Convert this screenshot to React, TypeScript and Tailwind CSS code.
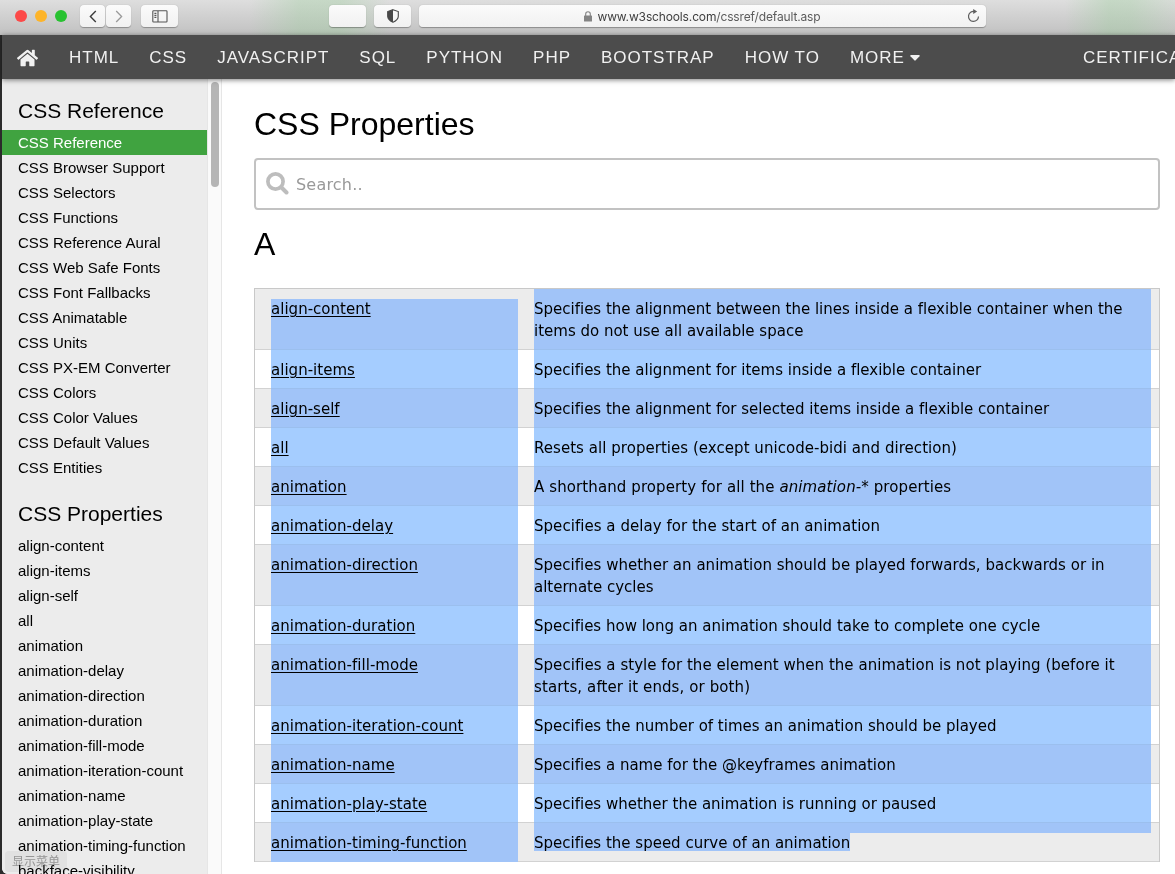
import { FaHome } from "react-icons/fa";

const referenceLinks = [
  "CSS Reference",
  "CSS Browser Support",
  "CSS Selectors",
  "CSS Functions",
  "CSS Reference Aural",
  "CSS Web Safe Fonts",
  "CSS Font Fallbacks",
  "CSS Animatable",
  "CSS Units",
  "CSS PX-EM Converter",
  "CSS Colors",
  "CSS Color Values",
  "CSS Default Values",
  "CSS Entities",
];

const propertyLinks = [
  "align-content",
  "align-items",
  "align-self",
  "all",
  "animation",
  "animation-delay",
  "animation-direction",
  "animation-duration",
  "animation-fill-mode",
  "animation-iteration-count",
  "animation-name",
  "animation-play-state",
  "animation-timing-function",
  "backface-visibility",
];

const navLinks = ["HTML", "CSS", "JAVASCRIPT", "SQL", "PYTHON", "PHP", "BOOTSTRAP", "HOW TO"];

const rows: { name: string; lines: React.ReactNode[] }[] = [
  {
    name: "align-content",
    lines: [
      "Specifies the alignment between the lines inside a flexible container when the",
      "items do not use all available space",
    ],
  },
  { name: "align-items", lines: ["Specifies the alignment for items inside a flexible container"] },
  { name: "align-self", lines: ["Specifies the alignment for selected items inside a flexible container"] },
  {
    name: "all",
    lines: [
      <span className="tracking-[0.04px]">Resets all properties (except unicode-bidi and direction)</span>,
    ],
  },
  {
    name: "animation",
    lines: [
      <span className="tracking-[0.1px]">
        A shorthand property for all the <em>animation-*</em> properties
      </span>,
    ],
  },
  {
    name: "animation-delay",
    lines: [<span className="tracking-[0.04px]">Specifies a delay for the start of an animation</span>],
  },
  {
    name: "animation-direction",
    lines: [
      <span className="tracking-[0.02px]">
        Specifies whether an animation should be played forwards, backwards or in
      </span>,
      "alternate cycles",
    ],
  },
  { name: "animation-duration", lines: ["Specifies how long an animation should take to complete one cycle"] },
  {
    name: "animation-fill-mode",
    lines: [
      <span className="tracking-[0.04px]">
        Specifies a style for the element when the animation is not playing (before it
      </span>,
      <span className="tracking-[0.1px]">starts, after it ends, or both)</span>,
    ],
  },
  { name: "animation-iteration-count", lines: ["Specifies the number of times an animation should be played"] },
  { name: "animation-name", lines: ["Specifies a name for the @keyframes animation"] },
  { name: "animation-play-state", lines: ["Specifies whether the animation is running or paused"] },
  { name: "animation-timing-function", lines: ["Specifies the speed curve of an animation"] },
];

const chromeButton =
  "flex h-[22px] items-center justify-center rounded-[4px] bg-gradient-to-b from-[#fbfbfb] to-[#f1f1f1] shadow-[0_0.5px_1px_rgba(0,0,0,0.3)]";

function BrowserBar() {
  return (
    <div className="relative flex h-[35px] shrink-0 items-start bg-gradient-to-b from-[#dedede] to-[#c1c1c1] pl-[15px] pt-[5px]">
      <div className="absolute inset-y-0 left-[250px] w-[140px] bg-[linear-gradient(90deg,rgba(150,205,150,0),rgba(150,205,150,0.32)_35%,rgba(150,205,150,0.32)_65%,rgba(150,205,150,0))]" />
      <div className="absolute inset-y-0 left-[1065px] w-[110px] bg-[linear-gradient(90deg,rgba(150,205,150,0),rgba(150,205,150,0.34)_40%,rgba(150,205,150,0.32)_60%,rgba(150,205,150,0.08))]" />
      <div className="relative flex h-[22px] items-center gap-2">
        <span className="h-3 w-3 rounded-full bg-[#fc4948]" />
        <span className="h-3 w-3 rounded-full bg-[#fdb429]" />
        <span className="h-3 w-3 rounded-full bg-[#28c231]" />
      </div>
      <div className="relative ml-[13px] flex gap-px">
        <div className={`${chromeButton} w-[25px]`}>
          <svg width="8" height="13" viewBox="0 0 8 13" fill="none" stroke="#3c3c3c" strokeWidth="1.4">
            <path d="M6.8 1 1.4 6.5 6.8 12" />
          </svg>
        </div>
        <div className={`${chromeButton} w-[25px]`}>
          <svg width="8" height="13" viewBox="0 0 8 13" fill="none" stroke="#9a9a9a" strokeWidth="1.3">
            <path d="M1.2 1 6.6 6.5 1.2 12" />
          </svg>
        </div>
      </div>
      <div className={`${chromeButton} relative ml-[10px] w-[37px]`}>
        <svg width="16" height="13" viewBox="0 0 16 13" fill="none" stroke="#555" strokeWidth="1.1">
          <rect x="0.8" y="0.8" width="14.2" height="11.2" rx="0.8" />
          <path d="M6 1v11M2.4 3.4h2M2.4 5.4h2M2.4 7.4h2" />
        </svg>
      </div>
      <div className={`${chromeButton} relative ml-[151px] w-[37px]`} />
      <div className={`${chromeButton} relative ml-2 w-[37px]`}>
        <svg width="12" height="14" viewBox="0 0 12 14">
          <path d="M6 .7 11.3 2.6v4.600c0 2.700-2 4.500-5.300 6C2.700 11.700.7 9.900.7 7.200V2.600Z" fill="none" stroke="#484848" strokeWidth="1.1" />
          <path d="M6 .7.7 2.600v4.600c0 2.700 2 4.500 5.300 6Z" fill="#484848" />
        </svg>
      </div>
      <div className={`${chromeButton} relative ml-2 w-[567px]`}>
        <svg className="mr-[5px]" width="8" height="11" viewBox="0 0 8 11">
          <rect x="0" y="4.500" width="8" height="6" rx="0.600" fill="#848484" />
          <path d="M1.700 5V3.100a2.300 2.300 0 0 1 4.600 0V5" fill="none" stroke="#848484" strokeWidth="1.100" />
        </svg>
        <span className="whitespace-nowrap pt-px font-['Inter',sans-serif] text-[12px] leading-[22px] tracking-[-0.14px] text-[#3e3e3e]">
          www.w3schools.com<span className="text-[#5c5c5c]">/cssref/default.asp</span>
        </span>
        <svg className="absolute right-[6px] top-[4px]" width="13" height="14" viewBox="0 0 13 14">
          <path d="M7.500 2.500A5 5 0 1 0 11.500 7.500" fill="none" stroke="#5f5f5f" strokeWidth="1.200" />
          <path d="M6.200 0v5l4-2.500Z" fill="#5f5f5f" />
        </svg>
      </div>
    </div>
  );
}

function NavBar() {
  return (
    <nav className="relative z-10 ml-[2px] flex h-[44px] shrink-0 items-center bg-[#4c4c4c] pt-px text-[17px] leading-[43px] tracking-[0.985px] text-[#f1f1f1] shadow-[0_1px_5px_rgba(0,0,0,0.5)]">
      <div className="flex w-[52px] justify-start pl-[15px]">
        <FaHome className="h-[20px] w-[21px]" />
      </div>
      {navLinks.map((label) => (
        <a key={label} className="shrink-0 whitespace-nowrap px-[15px]">
          {label}
        </a>
      ))}
      <a className="flex shrink-0 items-center px-[15px]">
        MORE
        <svg className="ml-[5px]" width="10" height="6" viewBox="0 0 10 6">
          <path d="M1 0h8q1.200.2.500 1.200L5.700 5.300q-.7.7-1.400 0L.5 1.200Q-.2.2 1 0Z" fill="#f1f1f1" />
        </svg>
      </a>
      <a className="ml-auto w-[92px] shrink-0 overflow-hidden whitespace-nowrap">CERTIFICATES</a>
    </nav>
  );
}

function SideSection({ title, links, active, className }: { title: string; links: string[]; active?: number; className: string }) {
  return (
    <section>
      <h2 className={`pl-4 text-[21px] leading-[30px] ${className}`}>{title}</h2>
      {links.map((link, i) => (
        <a
          key={link}
          className={`block h-[25px] whitespace-nowrap pl-4 text-[15px] leading-[25px] ${i === active ? "bg-[#40a340] text-white" : ""}`}
        >
          {link}
        </a>
      ))}
    </section>
  );
}

function PropertyRow({ index, name, lines }: { index: number; name: string; lines: React.ReactNode[] }) {
  const shaded = index % 2 === 0;
  const last = index === rows.length - 1;
  const plain = `border-b border-[#d2d2d2] ${shaded ? "bg-[#ececec]" : "bg-white"}`;
  const selected = `${shaded ? "bg-[#a1c4f8]" : "bg-[#a5cdff]"} border-b ${last ? "border-[#a1c4f8]" : "border-[#9bbfee]"}`;
  return (
    <div className="flex">
      <div className={`w-4 ${plain}`} />
      <div
        className={`w-[247px] pb-[7px] pt-[9px] ${selected} ${index === 0 ? "bg-[linear-gradient(#ececec_10px,#a1c4f8_10px)]" : ""}`}
      >
        <a className="tracking-[0.02px] underline decoration-1 underline-offset-2">{name}</a>
      </div>
      <div className={`w-4 ${plain}`} />
      {last ? (
        <div className={`w-[617px] ${plain}`}>
          <div className="h-[10px] bg-[#a1c4f8]" />
          <div className="h-[18px] w-[316px] whitespace-nowrap bg-[#a1c4f8] leading-5">{lines[0]}</div>
        </div>
      ) : (
        <div className={`w-[617px] pb-[7px] pt-[9px] ${selected}`}>
          {lines.map((line, i) => (
            <div key={i} className="whitespace-nowrap">
              {line}
            </div>
          ))}
        </div>
      )}
      <div className={`w-2 ${plain}`} />
    </div>
  );
}

export default function App() {
  return (
    <div className="relative flex h-[874px] w-[1175px] flex-col overflow-hidden bg-[#2b2b2b] font-['Liberation_Sans',Arial,sans-serif] text-black [font-variant-ligatures:none]">
      <BrowserBar />
      <NavBar />
      <div className="ml-[2px] flex min-h-0 flex-1 overflow-hidden rounded-bl-[6px] bg-white">
        <aside className="w-[205px] shrink-0 overflow-hidden bg-[#ececec]">
          <SideSection title="CSS Reference" links={referenceLinks} active={0} className="pb-[4px] pt-[17px]" />
          <SideSection title="CSS Properties" links={propertyLinks} className="pb-[4px] pt-[19px]" />
        </aside>
        <div className="w-[15px] shrink-0 border-x border-[#e6e6e6] bg-[#fafafa] pl-[3px] pt-[3px]">
          <div className="h-[105px] w-2 rounded-full bg-[#b5b5b5]" />
        </div>
        <main className="w-[953px] shrink-0 pl-[32px] pt-[23px]">
          <h1 className="text-[32px] leading-[44px]">CSS Properties</h1>
          <div className="mt-[12px] flex h-[52px] w-[906px] items-center rounded-[4px] border-2 border-[#c2c2c2] pl-[10px] font-['DejaVu_Sans',Verdana,sans-serif] text-[16px] text-[#999]">
            <svg className="-mt-[2px] mr-[7px]" width="23" height="23" viewBox="0 0 23 23" fill="none" stroke="#bdbdbd">
              <circle cx="9.500" cy="9.500" r="7.600" strokeWidth="3.700" />
              <path d="m15.500 15.500 5 5" strokeWidth="4" strokeLinecap="round" />
            </svg>
            <span className="pt-[2px] tracking-[0.2px]">Search..</span>
          </div>
          <h2 className="mt-[12px] text-[32px] leading-[44px]">A</h2>
          <div className="mt-[22px] w-[906px] border border-b-0 border-[#c8c8c8] font-['DejaVu_Sans',Verdana,sans-serif] text-[15px] leading-[22px]">
            {rows.map((row, i) => (
              <PropertyRow key={row.name} index={i} {...row} />
            ))}
          </div>
        </main>
      </div>
      <div className="absolute bottom-[2px] left-[5px] h-[21px] w-[62px] rounded-[4px] bg-[#f3f3f3] pl-[7px] font-['Noto_Sans_CJK_SC',sans-serif] text-[12px] leading-[19px] text-[#a2a2a2] mix-blend-multiply">
        显示菜单
      </div>
    </div>
  );
}
